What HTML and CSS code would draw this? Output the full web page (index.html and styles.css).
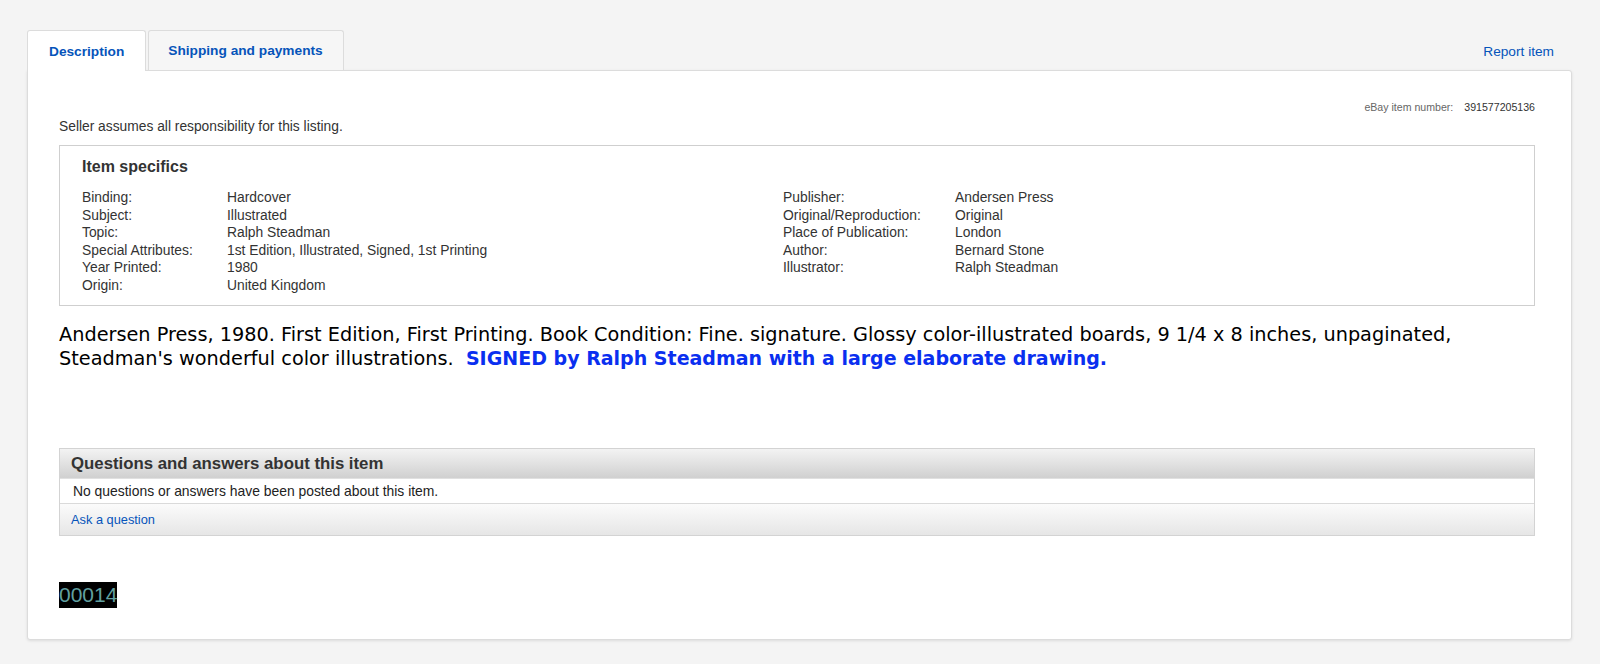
FILE: index.html
```html
<!DOCTYPE html>
<html lang="en">
<head>
<meta charset="utf-8">
<title>Item description</title>
<link rel="stylesheet" href="styles.css">
</head>
<body>
<div class="page">
  <div class="tabbar">
    <a class="tab tab-active" href="#">Description</a>
    <a class="tab" href="#">Shipping and payments</a>
    <a class="report" href="#">Report item</a>
  </div>
  <div class="panel">
    <div class="itemnum"><span class="itemnum-label">eBay item number:</span><span class="itemnum-value">391577205136</span></div>
    <p class="seller">Seller assumes all responsibility for this listing.</p>
    <div class="specs">
      <h2 class="specs-title">Item specifics</h2>
      <div class="specs-grid">
        <div class="specs-col specs-left">
          <div class="row"><span class="lbl">Binding:</span><span class="val">Hardcover</span></div>
          <div class="row"><span class="lbl">Subject:</span><span class="val">Illustrated</span></div>
          <div class="row"><span class="lbl">Topic:</span><span class="val">Ralph Steadman</span></div>
          <div class="row"><span class="lbl">Special Attributes:</span><span class="val">1st Edition, Illustrated, Signed, 1st Printing</span></div>
          <div class="row"><span class="lbl">Year Printed:</span><span class="val">1980</span></div>
          <div class="row"><span class="lbl">Origin:</span><span class="val">United Kingdom</span></div>
        </div>
        <div class="specs-col specs-right">
          <div class="row"><span class="lbl">Publisher:</span><span class="val">Andersen Press</span></div>
          <div class="row"><span class="lbl">Original/Reproduction:</span><span class="val">Original</span></div>
          <div class="row"><span class="lbl">Place of Publication:</span><span class="val">London</span></div>
          <div class="row"><span class="lbl">Author:</span><span class="val">Bernard Stone</span></div>
          <div class="row"><span class="lbl">Illustrator:</span><span class="val">Ralph Steadman</span></div>
        </div>
      </div>
    </div>
    <p class="desc">Andersen Press, 1980. First Edition, First Printing. Book Condition: Fine. signature. Glossy color-illustrated boards, 9 1/4 x 8 inches, unpaginated, Steadman's wonderful color illustrations.&nbsp; <strong class="signed">SIGNED by Ralph Steadman with a large elaborate drawing.</strong></p>
    <div class="qa">
      <div class="qa-head">Questions and answers about this item</div>
      <div class="qa-body">No questions or answers have been posted about this item.</div>
      <div class="qa-foot"><a href="#">Ask a question</a></div>
    </div>
    <div class="code"><span class="code-box">00014</span></div>
  </div>
</div>
</body>
</html>
```
FILE: styles.css
```css
html, body {
  margin: 0;
  padding: 0;
}
body {
  background: #f4f4f4;
  font-family: "Liberation Sans", Arial, Helvetica, sans-serif;
  color: #333;
}
a {
  color: #0654ba;
  text-decoration: none;
}
.page {
  padding: 30px 28px 25px 27px;
}
.tabbar {
  display: flex;
  align-items: flex-end;
  height: 40px;
}
.tab {
  box-sizing: border-box;
  height: 40px;
  padding: 0 20px 0 19px;
  display: flex;
  align-items: center;
  font-size: 13.7px;
  font-weight: bold;
  background: #f6f6f6;
  border: 1px solid #dcdcdc;
  border-bottom: none;
  border-radius: 3px 3px 0 0;
  margin-right: 2px;
}
.tab-active {
  background: #fff;
  height: 41px;
  margin-bottom: -1px;
  position: relative;
  z-index: 1;
  padding: 0 21px 0 21px;
}
.report {
  margin-left: auto;
  align-self: center;
  font-size: 13.7px;
  margin-right: 18px;
  padding-top: 2px;
}
.panel {
  background: #fff;
  border: 1px solid #dcdcdc;
  border-radius: 0 3px 3px 3px;
  box-shadow: 0 1px 3px rgba(0, 0, 0, 0.1);
  padding: 29px 36px 31px 31px;
}
.itemnum {
  display: flex;
  justify-content: flex-end;
  font-size: 10.6px;
  line-height: 14px;
}
.itemnum-label {
  color: #666;
  margin-right: 11px;
}
.itemnum-value {
  color: #333;
}
.seller {
  margin: 5px 0 0;
  font-size: 13.8px;
  line-height: 16px;
  color: #333;
}
.specs {
  margin-top: 10px;
  border: 1px solid #cfcfcf;
  padding: 11px 22px 11px 22px;
}
.specs-title {
  margin: 0;
  font-size: 16px;
  line-height: 20px;
  font-weight: bold;
  color: #333;
}
.specs-grid {
  margin-top: 12px;
  display: grid;
  grid-template-columns: 701px 1fr;
}
.row {
  display: flex;
  font-size: 13.85px;
  line-height: 17.5px;
  color: #333;
}
.specs-left .lbl {
  width: 145px;
  flex: none;
}
.specs-right .lbl {
  width: 172px;
  flex: none;
}
.desc {
  margin: 17px 0 0;
  font-family: "DejaVu Sans", Verdana, sans-serif;
  font-size: 19.3px;
  line-height: 24px;
  color: #000;
}
.signed {
  color: #0a2ff0;
  font-weight: bold;
  font-size: 19px;
  line-height: 20px;
}
.qa {
  margin-top: 77px;
  border: 1px solid #d3d3d3;
}
.qa-head {
  height: 29px;
  padding-left: 11px;
  display: flex;
  align-items: center;
  font-size: 16.8px;
  font-weight: bold;
  color: #333;
  background: linear-gradient(#f3f3f3, #d0d0d0);
  border-bottom: 1px solid #e0e0e0;
}
.qa-body {
  height: 24px;
  padding-left: 13px;
  display: flex;
  align-items: center;
  font-size: 13.9px;
  color: #222;
  border-bottom: 1px solid #dadada;
}
.qa-foot {
  height: 31px;
  padding-left: 11px;
  display: flex;
  align-items: center;
  font-size: 12.8px;
  background: linear-gradient(#fbfbfb, #e6e6e6);
}
.code {
  margin-top: 46px;
  display: flex;
}
.code-box {
  background: #000;
  color: #62a0a0;
  font-size: 21px;
  line-height: 26px;
  height: 26px;
  padding: 0;
}
```
